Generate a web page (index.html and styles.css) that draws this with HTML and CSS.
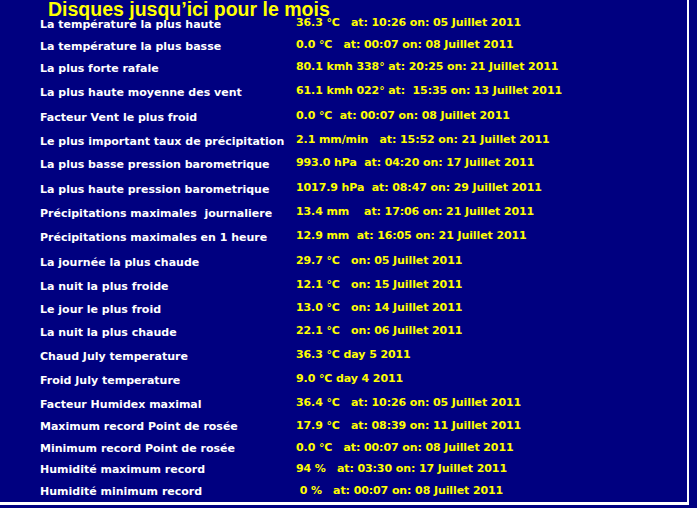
FILE: index.html
```html
<!DOCTYPE html>
<html lang="fr">
<head>
<meta charset="utf-8">
<title>Disques jusqu'ici pour le mois</title>
<link rel="stylesheet" href="styles.css">
</head>
<body>
<div class="frame">
  <h1 class="title">Disques jusqu’ici pour le mois</h1>
  <div class="records">
    <div class="row r22"><span class="label">La température la plus haute</span><span class="value">36.3 °C   at: 10:26 on: 05 Juillet 2011</span></div>
    <div class="row r22"><span class="label">La température la plus basse</span><span class="value">0.0 °C   at: 00:07 on: 08 Juillet 2011</span></div>
    <div class="row r24"><span class="label">La plus forte rafale</span><span class="value">80.1 kmh 338° at: 20:25 on: 21 Juillet 2011</span></div>
    <div class="row r25"><span class="label">La plus haute moyenne des vent</span><span class="value">61.1 kmh 022° at:  15:35 on: 13 Juillet 2011</span></div>
    <div class="row r24"><span class="label">Facteur Vent le plus froid</span><span class="value">0.0 °C  at: 00:07 on: 08 Juillet 2011</span></div>
    <div class="row r23"><span class="label">Le plus important taux de précipitation</span><span class="value">2.1 mm/min   at: 15:52 on: 21 Juillet 2011</span></div>
    <div class="row r25"><span class="label">La plus basse pression barometrique</span><span class="value">993.0 hPa  at: 04:20 on: 17 Juillet 2011</span></div>
    <div class="row r24"><span class="label">La plus haute pression barometrique</span><span class="value">1017.9 hPa  at: 08:47 on: 29 Juillet 2011</span></div>
    <div class="row r24"><span class="label">Précipitations maximales  journaliere</span><span class="value">13.4 mm    at: 17:06 on: 21 Juillet 2011</span></div>
    <div class="row r25"><span class="label">Précipitations maximales en 1 heure</span><span class="value">12.9 mm  at: 16:05 on: 21 Juillet 2011</span></div>
    <div class="row r24"><span class="label">La journée la plus chaude</span><span class="value">29.7 °C   on: 05 Juillet 2011</span></div>
    <div class="row r23"><span class="label">La nuit la plus froide</span><span class="value">12.1 °C   on: 15 Juillet 2011</span></div>
    <div class="row r23"><span class="label">Le jour le plus froid</span><span class="value">13.0 °C   on: 14 Juillet 2011</span></div>
    <div class="row r24"><span class="label">La nuit la plus chaude</span><span class="value">22.1 °C   on: 06 Juillet 2011</span></div>
    <div class="row r24"><span class="label">Chaud July temperature</span><span class="value">36.3 °C day 5 2011</span></div>
    <div class="row r24"><span class="label">Froid July temperature</span><span class="value">9.0 °C day 4 2011</span></div>
    <div class="row r23"><span class="label">Facteur Humidex maximal</span><span class="value">36.4 °C   at: 10:26 on: 05 Juillet 2011</span></div>
    <div class="row r22 tight"><span class="label">Maximum record Point de rosée</span><span class="value">17.9 °C   at: 08:39 on: 11 Juillet 2011</span></div>
    <div class="row r21 tight"><span class="label">Minimum record Point de rosée</span><span class="value">0.0 °C   at: 00:07 on: 08 Juillet 2011</span></div>
    <div class="row r22 tight"><span class="label">Humidité maximum record</span><span class="value">94 %   at: 03:30 on: 17 Juillet 2011</span></div>
    <div class="row r14 tight"><span class="label">Humidité minimum record</span><span class="value"> 0 %   at: 00:07 on: 08 Juillet 2011</span></div>
  </div>
</div>
</body>
</html>
```

FILE: styles.css
```css
html, body {
  margin: 0;
  padding: 0;
  background: #000080;
}

.frame {
  box-sizing: border-box;
  width: 689px;
  height: 505px;
  border-right: 2px solid #ffffff;
  border-bottom: 3px solid #ffffff;
  background: #000080;
  overflow: hidden;
}

.title {
  margin: 0 0 0 48px;
  height: 16px;
  font-family: "Liberation Sans", Arial, sans-serif;
  font-size: 19.5px;
  font-weight: bold;
  line-height: 18px;
  color: #ffff00;
  white-space: nowrap;
}

.records {
  display: flex;
  flex-direction: column;
}

.row {
  display: flex;
  font-family: "DejaVu Sans", sans-serif;
  font-size: 11px;
  font-weight: bold;
  line-height: 14px;
  white-space: pre;
}

.r14 { height: 14px; }
.r21 { height: 21px; }
.r22 { height: 22px; }
.r23 { height: 23px; }
.r24 { height: 24px; }
.r25 { height: 25px; }

.label {
  box-sizing: border-box;
  width: 296px;
  padding: 2px 0 0 40px;
  color: #ffffff;
}

.tight .label {
  padding-top: 1px;
}

.value {
  color: #ffff00;
  letter-spacing: -0.1px;
}
```
